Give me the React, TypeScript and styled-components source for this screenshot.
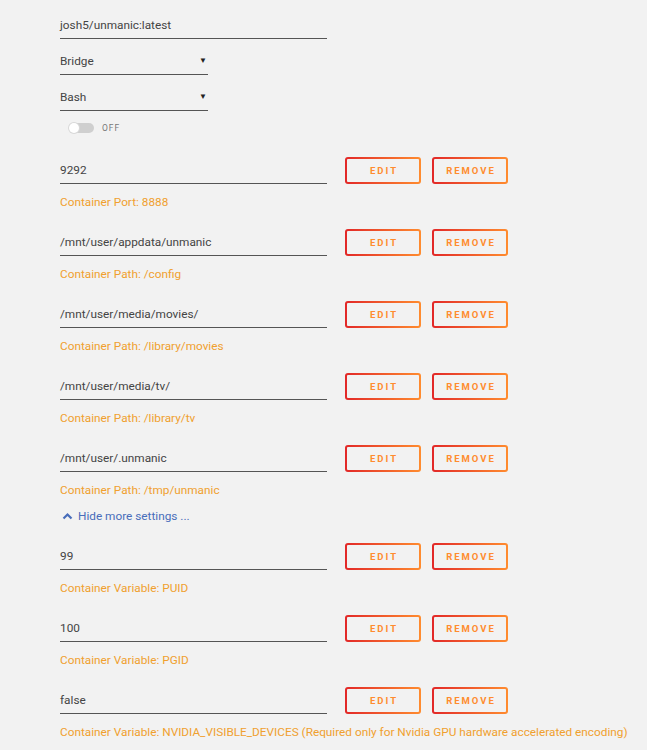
import React from "react";
import styled, { createGlobalStyle } from "styled-components";

const Global = createGlobalStyle`
  html, body { margin: 0; padding: 0; background: #f2f2f2; }
  body { font-family: Roboto, "Liberation Sans", sans-serif; }
`;

const Page = styled.div`
  padding: 12px 0 0 60px;
  display: flex;
  flex-direction: column;
  align-items: flex-start;
`;

const Field = styled.div<{ $w: number }>`
  width: ${(p) => p.$w}px;
  height: 26px;
  line-height: 28px;
  border-bottom: 1px solid #555;
  font-size: 11.8px;
  color: #444;
  box-sizing: content-box;
  display: flex;
  justify-content: space-between;
  align-items: center;
`;

const Stack = styled.div`
  display: flex;
  flex-direction: column;
  gap: 9px;
`;

const Arrow = styled.span`
  font-size: 8px;
  color: #222;
  margin-right: 1px;
`;

const ToggleRow = styled.div`
  display: flex;
  align-items: center;
  gap: 8px;
  margin: 12px 0 24px 9px;
  height: 10px;
`;

const Track = styled.div`
  width: 25px;
  height: 10px;
  border-radius: 5px;
  background: #cfcfcf;
  position: relative;
  box-sizing: border-box;
`;

const Knob = styled.div`
  position: absolute;
  left: 0;
  top: 0;
  width: 10px;
  height: 10px;
  border-radius: 50%;
  background: #fff;
  box-shadow: 0 0 0 1px #d8d8d8;
`;

const ToggleLabel = styled.span`
  font-size: 8.5px;
  letter-spacing: 1px;
  color: #777;
`;

const List = styled.div`
  display: flex;
  flex-direction: column;
  gap: 19px;
`;

const Block = styled.div`
  display: flex;
  flex-direction: column;
`;

const Row = styled.div`
  display: flex;
  align-items: flex-start;
  height: 27px;
`;

const Buttons = styled.div`
  display: flex;
  gap: 11px;
  margin-left: 18px;
`;

const Btn = styled.button`
  width: 76px;
  height: 27px;
  box-sizing: border-box;
  border: 2px solid transparent;
  border-radius: 3px;
  background: linear-gradient(#f2f2f2, #f2f2f2) padding-box,
    linear-gradient(90deg, #e22828, #ff8c2f) border-box;
  font-family: Roboto, "Liberation Sans", sans-serif;
  font-weight: bold;
  font-size: 9.5px;
  letter-spacing: 2px;
  padding: 0 0 0 2px;
  color: #ff8c2f;
  text-transform: uppercase;
`;

const Label = styled.div`
  margin-top: 10px;
  line-height: 16px;
  height: 16px;
  font-size: 11.8px;
  color: #f0a02f;
  white-space: nowrap;
`;

const Toggler = styled.div`
  margin: 10px 0 19px 2px;
  line-height: 16px;
  height: 16px;
  font-size: 11.8px;
  color: #486dba;
  display: flex;
  align-items: center;
  gap: 5px;
`;

type Item = { value: string; label: string };

const top: Item[] = [
  { value: "9292", label: "Container Port: 8888" },
  { value: "/mnt/user/appdata/unmanic", label: "Container Path: /config" },
  { value: "/mnt/user/media/movies/", label: "Container Path: /library/movies" },
  { value: "/mnt/user/media/tv/", label: "Container Path: /library/tv" },
  { value: "/mnt/user/.unmanic", label: "Container Path: /tmp/unmanic" },
];

const bottom: Item[] = [
  { value: "99", label: "Container Variable: PUID" },
  { value: "100", label: "Container Variable: PGID" },
  {
    value: "false",
    label:
      "Container Variable: NVIDIA_VISIBLE_DEVICES (Required only for Nvidia GPU hardware accelerated encoding)",
  },
];

const Entry = ({ item }: { item: Item }) => (
  <Block>
    <Row>
      <Field $w={267}>{item.value}</Field>
      <Buttons>
        <Btn>Edit</Btn>
        <Btn>Remove</Btn>
      </Buttons>
    </Row>
    <Label>{item.label}</Label>
  </Block>
);

export default function App() {
  return (
    <>
      <Global />
      <Page>
        <Stack>
          <Field $w={267}>josh5/unmanic:latest</Field>
          <Field $w={148}>
            Bridge<Arrow>▼</Arrow>
          </Field>
          <Field $w={148}>
            Bash<Arrow>▼</Arrow>
          </Field>
        </Stack>
        <ToggleRow>
          <Track>
            <Knob />
          </Track>
          <ToggleLabel>OFF</ToggleLabel>
        </ToggleRow>
        <List>
          {top.map((it) => (
            <Entry key={it.value} item={it} />
          ))}
        </List>
        <Toggler>
          <svg width="11" height="8" viewBox="0 0 11 8">
            <path d="M1.5 6.5 L5.5 2.5 L9.5 6.5" fill="none" stroke="#486dba" strokeWidth="2.2" />
          </svg>
          Hide more settings ...
        </Toggler>
        <List>
          {bottom.map((it) => (
            <Entry key={it.value} item={it} />
          ))}
        </List>
      </Page>
    </>
  );
}
